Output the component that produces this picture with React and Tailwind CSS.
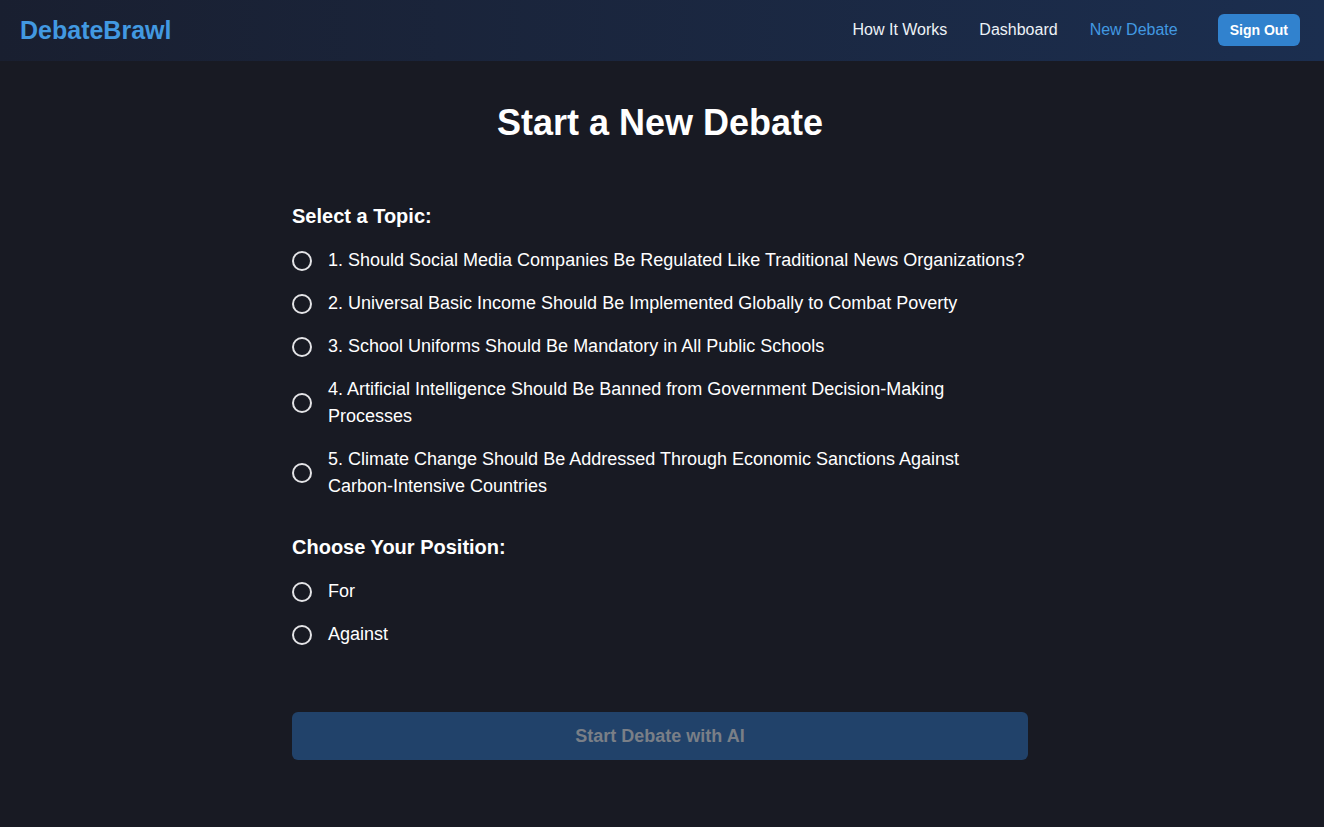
import React from "react";

const topics = [
  "1. Should Social Media Companies Be Regulated Like Traditional News Organizations?",
  "2. Universal Basic Income Should Be Implemented Globally to Combat Poverty",
  "3. School Uniforms Should Be Mandatory in All Public Schools",
  "4. Artificial Intelligence Should Be Banned from Government Decision-Making Processes",
  "5. Climate Change Should Be Addressed Through Economic Sanctions Against Carbon-Intensive Countries",
];

function Radio({ label }) {
  return (
    <label className="flex items-center gap-4 cursor-pointer">
      <span className="w-5 h-5 shrink-0 rounded-full border-2 border-[#e4e4e7]" />
      <span className="text-lg leading-[27px] text-white">{label}</span>
    </label>
  );
}

export default function App() {
  return (
    <div
      className="min-h-[827px] bg-[#181a23] text-white"
      style={{ fontFamily: '"Liberation Sans", Arial, sans-serif' }}
    >
      <header className="h-[61px] flex items-center justify-between pl-5 pr-6 bg-gradient-to-r from-[#191f30] to-[#1b2e4f]">
        <div className="text-[25px] leading-8 font-bold text-[#4299e1] -mt-px">DebateBrawl</div>
        <nav className="flex items-center -mt-px">
          <a className="text-base text-[#edf2f7]">How It Works</a>
          <a className="ml-8 text-base text-[#edf2f7]">Dashboard</a>
          <a className="ml-8 text-base text-[#4299e1]">New Debate</a>
          <button className="ml-10 h-8 px-3 rounded-md bg-[#3182ce] text-sm font-bold text-white">
            Sign Out
          </button>
        </nav>
      </header>

      <main className="pt-[42px] pr-1 flex flex-col items-center">
        <h1 className="text-4xl leading-10 font-bold text-white">Start a New Debate</h1>

        <div className="w-[736px] mt-[59px]">
          <h2 className="text-xl leading-7 font-bold mb-[17px]">Select a Topic:</h2>
          <div className="flex flex-col gap-4">
            {topics.map((t) => (
              <Radio key={t} label={t} />
            ))}
          </div>

          <h2 className="text-xl leading-7 font-bold mt-[33px] mb-[17px]">Choose Your Position:</h2>
          <div className="flex flex-col gap-4">
            <Radio label="For" />
            <Radio label="Against" />
          </div>

          <button
            disabled
            className="mt-[64px] w-full h-12 rounded-md bg-[#21426a] text-lg font-bold text-[#7a7f87]"
          >
            Start Debate with AI
          </button>
        </div>
      </main>
    </div>
  );
}
